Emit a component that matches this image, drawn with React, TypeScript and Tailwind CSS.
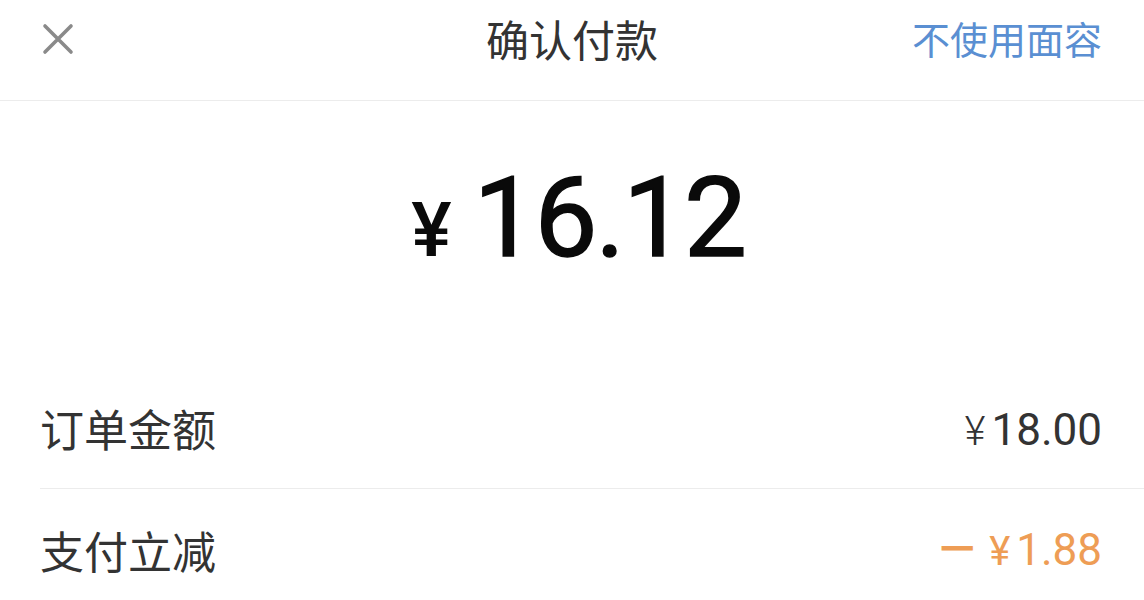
import React from "react";

const cjk = { fontFamily: '"Noto Sans CJK SC", "Noto Sans", sans-serif' };
const num = { fontFamily: 'Roboto, "Noto Sans CJK SC", sans-serif' };

export default function App() {
  return (
    <div className="w-[1144px] h-[600px] bg-white overflow-hidden relative" style={cjk}>
      {/* Header */}
      <div className="h-[101px] border-b border-[#ececec] flex items-center justify-between px-[40px] relative">
        <svg width="34" height="34" viewBox="0 0 34 34" className="ml-[1px] -mt-[22px]">
          <path d="M4 4 L30 30 M30 4 L4 30" stroke="#8a8a8a" strokeWidth="3.6" strokeLinecap="round" />
        </svg>
        <div className="absolute left-0 right-0 top-0 h-[80px] flex items-center justify-center pointer-events-none">
          <span className="text-[43px] text-[#333333] leading-none -mt-[4px]">确认付款</span>
        </div>
        <span className="text-[38px] text-[#5a8fd2] leading-none -mt-[24px] mr-[2px]">不使用面容</span>
      </div>

      {/* Amount */}
      <div className="h-[267px] flex justify-center items-start pt-[61px]">
        <div className="flex items-baseline text-[#0a0a0a] ml-[12px]" style={num}>
          <span className="text-[76px] font-medium leading-none mr-[22px]">¥</span>
          <span className="text-[112px] font-normal leading-none tracking-[-2px] [-webkit-text-stroke:1.5px_#0a0a0a]">16.12</span>
        </div>
      </div>

      {/* Rows */}
      <div className="pl-[40px]">
        <div className="h-[121px] flex items-center justify-between pr-[42px] border-b border-[#ececec]">
          <span className="text-[44px] text-[#333333] leading-none">订单金额</span>
          <span className="text-[44px] text-[#333333] leading-none flex items-baseline mt-[4px]" style={num}>
            <span className="text-[40px] mr-[6px] font-light">¥</span>18.00
          </span>
        </div>
        <div className="h-[121px] flex items-center justify-between pr-[42px]">
          <span className="text-[44px] text-[#333333] leading-none">支付立减</span>
          <span className="text-[44px] text-[#ee9d55] leading-none flex items-baseline" style={num}>
            <span className="mr-[10px] font-bold">－</span>
            <span className="text-[40px] mr-[6px]">¥</span>1.88
          </span>
        </div>
      </div>
    </div>
  );
}
